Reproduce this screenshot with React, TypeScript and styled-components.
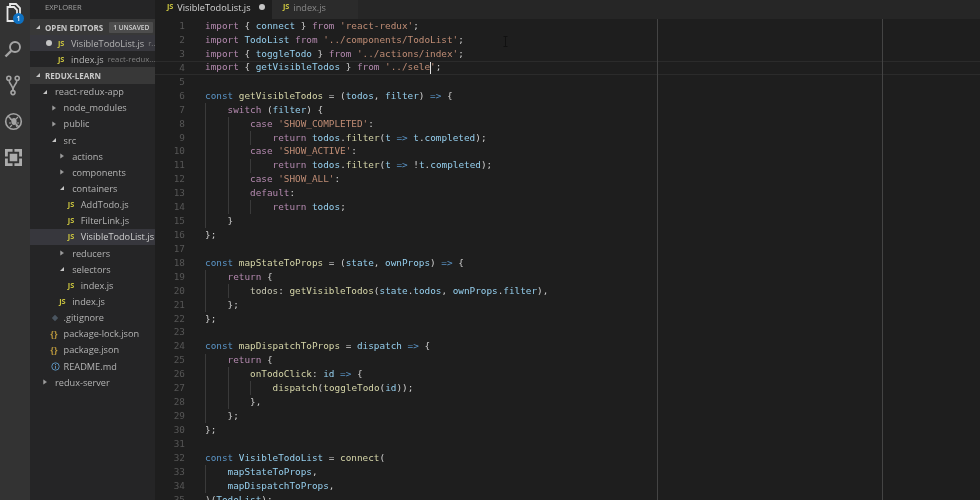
import React from 'react';
import styled, { createGlobalStyle } from 'styled-components';

const Global = createGlobalStyle`
  html, body { margin: 0; padding: 0; background: #1e1e1e; overflow: hidden; }
  #root { width: 980px; height: 500px; }
`;

const Shell = styled.div`
  display: flex;
  width: 980px;
  height: 500px;
  overflow: hidden;
  background: #1e1e1e;
  filter: blur(0.4px);
`;

const ActivityBar = styled.nav`
  width: 30px;
  flex: none;
  background: #333333;
  display: flex;
  flex-direction: column;
  align-items: center;
  padding: 0 4px 0 0;
  box-sizing: border-box;
  gap: 10px;
`;

const ActivityIcon = styled.div`
  position: relative;
  width: 24px;
  height: 26px;
  display: flex;
  align-items: center;
  justify-content: center;
`;

const Badge = styled.span`
  position: absolute;
  left: 12px;
  top: 13px;
  width: 11px;
  height: 11px;
  border-radius: 50%;
  background: #0e70c0;
  color: #fff;
  font: 600 7px/11px 'Open Sans', sans-serif;
  text-align: center;
`;

const Sidebar = styled.aside`
  width: 125px;
  flex: none;
  background: #252526;
  color: #b4b4b4;
  font-family: 'Open Sans', 'Noto Sans', sans-serif;
  font-size: 9.2px;
  overflow: hidden;
`;

const SidebarTitle = styled.div`
  height: 19px;
  padding: 0 0 5px 15px;
  box-sizing: border-box;
  display: flex;
  align-items: center;
  font-size: 7.6px;
  color: #a0a0a0;
`;

const SectionHeader = styled.div`
  height: 16.15px;
  display: flex;
  align-items: center;
  background: #383838;
  color: #c8c8c8;
  font-size: 8px;
  font-weight: 700;
  padding-left: 5px;
  white-space: nowrap;
`;

const SectionArrow = styled.span`
  width: 10px;
  flex: none;
  display: flex;
  align-items: center;
`;

const UnsavedTag = styled.span`
  margin-left: 6px;
  background: #4d4d4d;
  color: #d0d0d0;
  font-size: 6.6px;
  font-weight: 600;
  padding: 0 4px;
  line-height: 11px;
  border-radius: 1px;
`;

const Row = styled.div<{ $depth: number; $selected?: boolean }>`
  height: 16.15px;
  display: flex;
  align-items: center;
  white-space: nowrap;
  overflow: hidden;
  padding-left: ${(p) => p.$depth * 8.6 + 3.4}px;
  background: ${(p) => (p.$selected ? '#37373d' : 'transparent')};
  color: ${(p) => (p.$selected ? '#cfcfcf' : '#b4b4b4')};
`;

const Lead = styled.span`
  width: 13px;
  flex: none;
  display: flex;
  align-items: center;
`;

const Dim = styled.span`
  margin-left: 4px;
  font-size: 7.7px;
  color: #808080;
`;

const Dot = styled.span`
  width: 6px;
  height: 6px;
  border-radius: 50%;
  background: #c5c5c5;
  flex: none;
  margin-right: 6px;
`;

const EditorRow = styled.div<{ $selected?: boolean }>`
  height: 16.15px;
  display: flex;
  align-items: center;
  white-space: nowrap;
  overflow: hidden;
  padding-left: ${(p) => (p.$selected ? 16 : 28)}px;
  background: ${(p) => (p.$selected ? '#37373d' : 'transparent')};
`;

const JsIcon = styled.span`
  color: #c9c33f;
  font: 700 7.4px/1 'Open Sans', sans-serif;
  letter-spacing: -0.1px;
`;

const GlyphIcon = styled.span<{ $color: string }>`
  color: ${(p) => p.$color};
  font: 700 8px/1 'Open Sans', sans-serif;
  letter-spacing: 0.6px;
`;

const Main = styled.main`
  flex: 1;
  min-width: 0;
  display: flex;
  flex-direction: column;
  background: #1e1e1e;
`;

const TabBar = styled.div`
  height: 19px;
  flex: none;
  display: flex;
  background: #262626;
  font-family: 'Open Sans', 'Noto Sans', sans-serif;
  font-size: 9.2px;
`;

const Tab = styled.div<{ $active?: boolean }>`
  display: flex;
  align-items: center;
  gap: 4px;
  width: ${(p) => (p.$active ? 117 : 86)}px;
  padding: 0 0 5px ${(p) => (p.$active ? 12 : 11)}px;
  box-sizing: border-box;
  background: ${(p) => (p.$active ? '#1e1e1e' : '#2b2b2b')};
  color: ${(p) => (p.$active ? '#d4d4d4' : '#8a8a8a')};
`;

const TabDot = styled.span`
  width: 6px;
  height: 6px;
  border-radius: 50%;
  background: #c5c5c5;
  margin-left: 4px;
`;

const Editor = styled.div`
  position: relative;
  flex: 1;
  padding-top: 0.4px;
  overflow: hidden;
  font-family: 'DejaVu Sans Mono', monospace;
  font-size: 9.35px;
`;

const Ruler = styled.div<{ $left: number }>`
  position: absolute;
  top: -2px;
  bottom: 0;
  left: ${(p) => p.$left}px;
  width: 1px;
  background: #444444;
`;

const IBeam = styled.svg`
  position: absolute;
  left: 348px;
  top: 17px;
`;

const CodeLine = styled.div<{ $current?: boolean }>`
  height: 13.93px;
  display: flex;
  align-items: center;
  box-sizing: border-box;
  padding-bottom: 1.4px;
  white-space: pre;
  ${(p) => (p.$current ? 'box-shadow: inset 0 1px #2b2b2b, inset 0 -1px #2b2b2b;' : '')}
`;

const LineNumber = styled.span`
  width: 30px;
  flex: none;
  text-align: right;
  color: #565656;
  margin-right: 20px;
`;

const Guide = styled.span`
  width: 22.54px;
  height: 13.93px;
  margin-bottom: -1.4px;
  flex: none;
  box-shadow: inset 1px 0 #3a3a3a;
`;

const palette: Record<string, string> = {
  k: '#b58ab0',
  b: '#5a94c6',
  v: '#95cfee',
  f: '#d5d5a8',
  s: '#c08d75',
  p: '#d0d0d0',
  o: '#5a94c6',
  t: '#c5c5b0',
};

const Token = styled.span<{ $kind: string }>`
  color: ${(p) => palette[p.$kind] ?? '#d4d4d4'};
`;

const Caret = styled.span`
  display: inline-block;
  width: 1px;
  height: 12px;
  background: #e0e0e0;
  margin: 0 -0.5px;
  vertical-align: middle;
`;

type Tok = [string, string];
type L = { indent: number; toks: Tok[]; caret?: boolean };

const l = (indent: number, ...toks: Tok[]): L => ({ indent, toks });

const code: L[] = [
  l(0, ['k', 'import'], ['p', ' { '], ['v', 'connect'], ['p', ' } '], ['k', 'from'], ['s', " 'react-redux'"], ['p', ';']),
  l(0, ['k', 'import'], ['v', ' TodoList '], ['k', 'from'], ['s', " '../components/TodoList'"], ['p', ';']),
  l(0, ['k', 'import'], ['p', ' { '], ['v', 'toggleTodo'], ['p', ' } '], ['k', 'from'], ['s', " '../actions/index'"], ['p', ';']),
  { indent: 0, caret: true, toks: [['k', 'import'], ['p', ' { '], ['v', 'getVisibleTodos'], ['p', ' } '], ['k', 'from'], ['s', " '../sele"]] },
  l(0),
  l(0, ['b', 'const'], ['f', ' getVisibleTodos'], ['p', ' = ('], ['v', 'todos'], ['p', ', '], ['v', 'filter'], ['p', ') '], ['o', '=>'], ['p', ' {']),
  l(1, ['k', 'switch'], ['p', ' ('], ['v', 'filter'], ['p', ') {']),
  l(2, ['k', 'case'], ['s', " 'SHOW_COMPLETED'"], ['p', ':']),
  l(3, ['k', 'return'], ['v', ' todos'], ['p', '.'], ['f', 'filter'], ['p', '('], ['v', 't'], ['o', ' =>'], ['v', ' t'], ['p', '.'], ['v', 'completed'], ['p', ');']),
  l(2, ['k', 'case'], ['s', " 'SHOW_ACTIVE'"], ['p', ':']),
  l(3, ['k', 'return'], ['v', ' todos'], ['p', '.'], ['f', 'filter'], ['p', '('], ['v', 't'], ['o', ' =>'], ['p', ' !'], ['v', 't'], ['p', '.'], ['v', 'completed'], ['p', ');']),
  l(2, ['k', 'case'], ['s', " 'SHOW_ALL'"], ['p', ':']),
  l(2, ['k', 'default'], ['p', ':']),
  l(3, ['k', 'return'], ['v', ' todos'], ['p', ';']),
  l(1, ['p', '}']),
  l(0, ['p', '};']),
  l(0),
  l(0, ['b', 'const'], ['f', ' mapStateToProps'], ['p', ' = ('], ['v', 'state'], ['p', ', '], ['v', 'ownProps'], ['p', ') '], ['o', '=>'], ['p', ' {']),
  l(1, ['k', 'return'], ['p', ' {']),
  l(2, ['t', 'todos'], ['p', ': '], ['f', 'getVisibleTodos'], ['p', '('], ['v', 'state'], ['p', '.'], ['v', 'todos'], ['p', ', '], ['v', 'ownProps'], ['p', '.'], ['v', 'filter'], ['p', '),']),
  l(1, ['p', '};']),
  l(0, ['p', '};']),
  l(0),
  l(0, ['b', 'const'], ['f', ' mapDispatchToProps'], ['p', ' = '], ['v', 'dispatch'], ['o', ' =>'], ['p', ' {']),
  l(1, ['k', 'return'], ['p', ' {']),
  l(2, ['f', 'onTodoClick'], ['p', ': '], ['v', 'id'], ['o', ' =>'], ['p', ' {']),
  l(3, ['f', 'dispatch'], ['p', '('], ['f', 'toggleTodo'], ['p', '('], ['v', 'id'], ['p', '));']),
  l(2, ['p', '},']),
  l(1, ['p', '};']),
  l(0, ['p', '};']),
  l(0),
  l(0, ['b', 'const'], ['v', ' VisibleTodoList'], ['p', ' = '], ['f', 'connect'], ['p', '(']),
  l(1, ['v', 'mapStateToProps'], ['p', ',']),
  l(1, ['v', 'mapDispatchToProps'], ['p', ',']),
  l(0, ['p', ')('], ['v', 'TodoList'], ['p', ');']),
];

const Expanded = () => (
  <svg width="6" height="6" viewBox="0 0 6 6"><path d="M5 1v4H1z" fill="#c5c5c5" /></svg>
);
const Collapsed = () => (
  <svg width="6" height="6" viewBox="0 0 6 6"><path d="M1.5 0.8 4.6 3 1.5 5.2z" fill="#a0a0a0" stroke="#a0a0a0" strokeWidth=".4" /></svg>
);

type Node = { depth: number; name: string; kind: 'open' | 'closed' | 'js' | 'git' | 'json' | 'info'; selected?: boolean };

const tree: Node[] = [
  { depth: 1, name: 'react-redux-app', kind: 'open' },
  { depth: 2, name: 'node_modules', kind: 'closed' },
  { depth: 2, name: 'public', kind: 'closed' },
  { depth: 2, name: 'src', kind: 'open' },
  { depth: 3, name: 'actions', kind: 'closed' },
  { depth: 3, name: 'components', kind: 'closed' },
  { depth: 3, name: 'containers', kind: 'open' },
  { depth: 4, name: 'AddTodo.js', kind: 'js' },
  { depth: 4, name: 'FilterLink.js', kind: 'js' },
  { depth: 4, name: 'VisibleTodoList.js', kind: 'js', selected: true },
  { depth: 3, name: 'reducers', kind: 'closed' },
  { depth: 3, name: 'selectors', kind: 'open' },
  { depth: 4, name: 'index.js', kind: 'js' },
  { depth: 3, name: 'index.js', kind: 'js' },
  { depth: 2, name: '.gitignore', kind: 'git' },
  { depth: 2, name: 'package-lock.json', kind: 'json' },
  { depth: 2, name: 'package.json', kind: 'json' },
  { depth: 2, name: 'README.md', kind: 'info' },
  { depth: 1, name: 'redux-server', kind: 'closed' },
];

const leadFor = (kind: Node['kind']) => {
  switch (kind) {
    case 'open': return <Expanded />;
    case 'closed': return <Collapsed />;
    case 'js': return <JsIcon>JS</JsIcon>;
    case 'json': return <GlyphIcon $color="#c9a33f">{'{}'}</GlyphIcon>;
    case 'info': return (
      <svg width="9" height="9" viewBox="0 0 9 9"><circle cx="4.5" cy="4.5" r="3.7" fill="none" stroke="#5a8fb8" /><path d="M4.5 3.8v3M4.5 2v1" stroke="#5a8fb8" /></svg>
    );
    case 'git': return (
      <svg width="8" height="8" viewBox="0 0 8 8"><path d="M4 .8 7.2 4 4 7.2.8 4z" fill="#4a5560" /></svg>
    );
  }
};

export default function App() {
  return (
    <>
      <Global />
      <Shell>
        <ActivityBar>
          <ActivityIcon>
            <svg width="15" height="20" viewBox="0 0 15 20" fill="none" stroke="#e6e6e6" strokeWidth="1.8">
              <path d="M4 3V1h6l4 4v10h-2" />
              <path d="M1.5 4h6.5l3 3v11H1.5z" />
            </svg>
            <Badge>1</Badge>
          </ActivityIcon>
          <ActivityIcon>
            <svg width="18" height="18" viewBox="0 0 18 18" fill="none" stroke="#a4a4a4" strokeWidth="1.9">
              <circle cx="11" cy="7" r="5" />
              <path d="M7.2 10.8 1.5 16.5" strokeWidth="2.4" />
            </svg>
          </ActivityIcon>
          <ActivityIcon>
            <svg width="14" height="21" viewBox="0 0 14 21" fill="none" stroke="#a4a4a4" strokeWidth="1.6">
              <circle cx="2.8" cy="3.2" r="2" />
              <circle cx="11.2" cy="3.2" r="2" />
              <circle cx="7" cy="17.6" r="2" />
              <path d="M3 5.2C3.4 10 7 10 7 15.4M11 5.2C10.6 10 7 10 7 15.4" />
            </svg>
          </ActivityIcon>
          <ActivityIcon>
            <svg width="19" height="19" viewBox="0 0 19 19" fill="none" stroke="#a4a4a4">
              <circle cx="9.5" cy="9.5" r="7.8" strokeWidth="1.6" />
              <path d="M4 4l11 11" strokeWidth="1.5" />
              <ellipse cx="10" cy="9.5" rx="2.6" ry="3.4" fill="#a4a4a4" stroke="none" />
              <path d="M6 7l2 1M14 5l-2 2M5 11h2M15 11h-2M6 15l2-2M13 15l-1-2" strokeWidth="1.1" />
            </svg>
          </ActivityIcon>
          <ActivityIcon>
            <svg width="17" height="17" viewBox="0 0 18 18" fill="#acacac">
              <path fillRule="evenodd" d="M0 0h8v3H3v5H0zM10 0h8v8h-3V3h-5zM0 10h3v5h5v3H0zM18 10v8h-8v-3h5v-5zM5 5h8v8H5z" />
            </svg>
          </ActivityIcon>
        </ActivityBar>

        <Sidebar>
          <SidebarTitle>EXPLORER</SidebarTitle>
          <SectionHeader>
            <SectionArrow><Expanded /></SectionArrow>
            OPEN EDITORS
            <UnsavedTag>1 UNSAVED</UnsavedTag>
          </SectionHeader>
          <EditorRow $selected>
            <Dot />
            <Lead><JsIcon>JS</JsIcon></Lead>
            VisibleTodoList.js<Dim>r...</Dim>
          </EditorRow>
          <EditorRow>
            <Lead><JsIcon>JS</JsIcon></Lead>
            index.js<Dim>react-redux...</Dim>
          </EditorRow>
          <SectionHeader>
            <SectionArrow><Expanded /></SectionArrow>
            REDUX-LEARN
          </SectionHeader>
          {tree.map((n, i) => (
            <Row key={i} $depth={n.depth} $selected={n.selected}>
              <Lead>{leadFor(n.kind)}</Lead>
              {n.name}
            </Row>
          ))}
        </Sidebar>

        <Main>
          <TabBar>
            <Tab $active>
              <JsIcon>JS</JsIcon>
              VisibleTodoList.js
              <TabDot />
            </Tab>
            <Tab>
              <JsIcon>JS</JsIcon>
              index.js
            </Tab>
          </TabBar>
          <Editor>
            {code.map((line, i) => (
              <CodeLine key={i} $current={i === 3}>
                <LineNumber>{i + 1}</LineNumber>
                {Array.from({ length: line.indent }).map((_, g) => <Guide key={g} />)}
                <span>
                  {line.toks.map(([k, t], j) => <Token key={j} $kind={k}>{t}</Token>)}
                  {line.caret && <><Caret /><Token $kind="s">'</Token><Token $kind="p">;</Token></>}
                </span>
              </CodeLine>
            ))}
            <Ruler $left={502} />
            <Ruler $left={727} />
            <IBeam width="5" height="11" viewBox="0 0 5 11" fill="none" stroke="#111">
              <path d="M.5.5h4M2.5.5v10M.5 10.5h4" />
            </IBeam>
          </Editor>
        </Main>
      </Shell>
    </>
  );
}
